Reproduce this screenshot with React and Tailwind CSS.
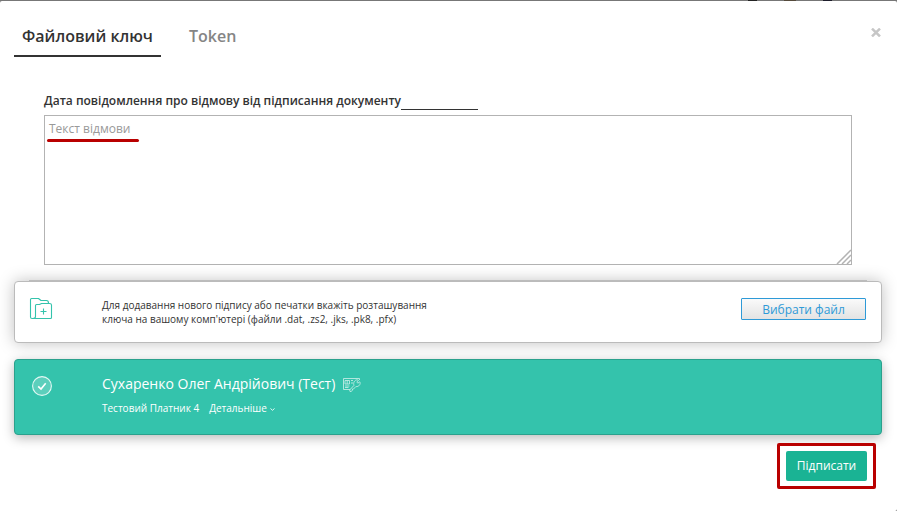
function FolderPlusIcon() {
  return (
    <svg width="24" height="24" viewBox="0 0 24 24" fill="none" stroke="#34c3ac" strokeWidth="1.1" strokeLinejoin="round">
      <path d="M4 21.5H3Q1.5 21.5 1.5 20V2.5Q1.5 1.5 2.5 1.5H9.5L12 3.5H17.5Q19.5 3.5 19.5 6" />
      <path d="M4 21.5Q6.5 21.5 6.5 19.5V8.5Q6.5 7.5 7.5 7.5H10.5L12.5 6.5H20.5Q22.5 6.5 22.5 8V20.5Q22.5 21.5 21.5 21.5H4" />
      <path d="M14.5 11.5V17.5M11.5 14.5H17.5" />
    </svg>
  );
}

function CheckIcon() {
  return (
    <svg width="20" height="20" viewBox="0 0 20 20" fill="none">
      <circle cx="10" cy="10" r="9.4" fill="#ffffff" fillOpacity="0.2" stroke="#e3f8f4" strokeWidth="1.1" />
      <path d="M6.2 10.3L9 13L13.7 7.3" stroke="#ffffff" strokeWidth="1.6" />
    </svg>
  );
}

function IdKeyIcon() {
  return (
    <svg width="18" height="14" viewBox="0 0 18 14" fill="none" stroke="#bfebe3" strokeWidth="0.9">
      <path d="M7 11.5H0.5V0.5H16.5V2" />
      <path d="M2 2.5H6.5V6H2ZM4.2 2.5V6M2 8H6.5M2 9.5H5.5M8 2.5H10M8 5H10" />
      <path d="M7 13.5L6.7 12L11 7.3C10 5 11.5 2 14 1.8L15.5 2.3L13.8 4L14.8 5.2L16.8 3.8C18 6 16 9 12.8 8.6L10.5 11H9.5V12.3L8 13.5Z" />
    </svg>
  );
}

export default function App() {
  return (
    <div className="h-[511px] w-[897px] overflow-hidden bg-[#777] font-['Open_Sans','Noto_Sans',sans-serif] text-[#333]">
      <div className="flex h-px gap-[27px] pl-[748px]">
        <span className="h-px w-[9px] bg-[#222]" />
        <span className="h-px w-3 bg-[#554a3c]" />
        <span className="h-px w-[9px] bg-[#1d1d2b]" />
      </div>
      <div className="flex h-[510px] flex-col rounded-t-[2px] rounded-br-[2px] bg-white px-3.5">
        <header className="flex h-14 shrink-0 items-start justify-between">
          <nav className="flex h-14 text-base font-semibold leading-[22px]">
            <div className="w-[147px] whitespace-nowrap border-b-2 border-[#333] pl-2 pt-6">Файловий ключ</div>
            <div className="pl-7 pt-6 text-[#858585]">Token</div>
          </nav>
          <svg className="mr-0.5 mt-[27px]" width="10" height="9" viewBox="0 0 10 9" stroke="#c6c6c6" strokeWidth="2.5">
            <path d="M1 0.6L9 8.4M9 0.6L1 8.4" />
          </svg>
        </header>

        <section className="mx-[30px] mt-[35px] flex h-[173px] shrink-0 flex-col">
          <div className="flex h-[23px] items-start text-xs font-semibold leading-[17px]">
            <span className="w-[357px] whitespace-nowrap">Дата повідомлення про відмову від підписання документу</span>
            <span className="h-[18px] w-[77px] border-b border-[#333]" />
          </div>
          <div className="flex h-[150px] w-[808px] items-end justify-between border border-[#b3b3b3]">
            <div className="self-start pl-1 pt-1 text-xs leading-[17px] text-[#999]">
              <div className="whitespace-nowrap">Текст відмови</div>
              <div className="-ml-[2.5px] mt-[2.4px] h-[3px] w-[92.5px] rounded-full bg-[#b90000]" />
            </div>
            <svg width="15" height="15" viewBox="0 0 15 15" stroke="#b3b3b3" strokeWidth="1.5">
              <path d="M1 15L15 1M6 15L15 6M11 15L15 11" />
            </svg>
          </div>
        </section>

        <div className="ml-[15px] mt-[15px] h-px w-[838px] shrink-0 bg-[#d5d5d5]" />
        <section className="flex h-[62px] w-[868px] shrink-0 items-start rounded-[4px] border border-[#bbb] bg-white pl-3.5 pr-[15px] shadow-[0_0_16px_rgba(0,0,0,0.25)]">
          <div className="mt-[15px] w-[73px]"><FolderPlusIcon /></div>
          <p className="mt-4 flex-1 whitespace-nowrap text-[10px] leading-[14px]">
            Для додавання нового підпису або печатки вкажіть розташування<br />
            ключа на вашому комп'ютері (файли .dat, .zs2, .jks, .pk8, .pfx)
          </p>
          <button className="mt-4 h-[22px] w-[125px] rounded-[1px] border border-[#2e9ad7] bg-linear-to-b from-[#fafafa] to-[#e3e3e3] pt-px text-xs leading-5 text-[#2e9ad7]">Вибрати файл</button>
        </section>

        <section className="mt-4 flex h-[76px] w-[868px] shrink-0 items-start rounded-[4px] border border-[#2ba18d] bg-[#34c3ac] pl-[17px] text-white shadow-[0_3px_12px_rgba(0,0,0,0.28)]">
          <div className="mt-4 w-[70px]"><CheckIcon /></div>
          <div className="whitespace-nowrap pt-[14px]">
            <div className="flex h-5 items-center gap-2 text-sm leading-5">
              <span>Сухаренко Олег Андрійович (Тест)</span>
              <span className="pt-0.5"><IdKeyIcon /></span>
            </div>
            <div className="mt-[7px] flex h-[14px] items-center text-[10px] leading-[14px]">
              <span>Тестовий Платник 4</span>
              <span className="ml-2.5">Детальніше</span>
              <svg className="ml-[3px] mt-0.5" width="5" height="3" viewBox="0 0 5 3" fill="none" stroke="#e3f8f4"><path d="M0.5 0.5L2.5 2.3L4.5 0.5" /></svg>
            </div>
          </div>
        </section>

        <div className="mr-[7px] mt-2 flex h-[46px] w-[99px] shrink-0 items-center justify-center self-end rounded-[2px] border-3 border-[#b90000] bg-white">
          <button className="h-[30px] w-[81px] rounded-[2px] bg-[#1ab394] text-xs text-white">Підписати</button>
        </div>
      </div>
    </div>
  );
}
